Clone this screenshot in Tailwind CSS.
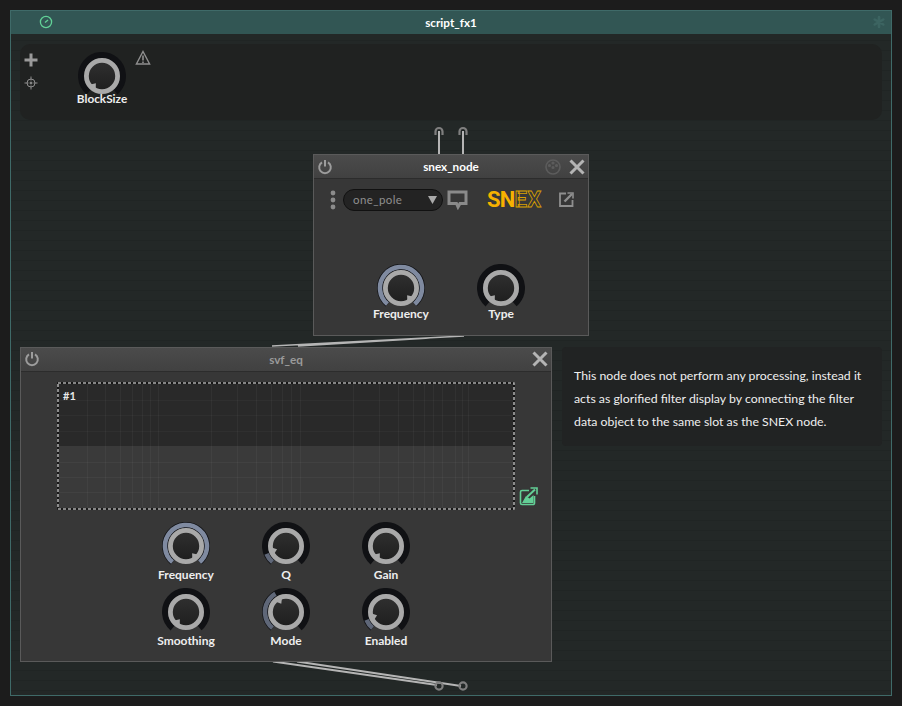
<!DOCTYPE html>
<html>
<head>
<meta charset="utf-8">
<script src="https://cdn.jsdelivr.net/npm/@tailwindcss/browser@4"></script>
</head>
<body class="m-0 bg-[#1c1c1c] font-['Lato','Noto_Sans',sans-serif]">
<svg class="absolute w-0 h-0"><defs>
  <linearGradient id="kf" x1="0" y1="0" x2="0" y2="1"><stop offset="0" stop-color="#303030"/><stop offset="1" stop-color="#1e1e1e"/></linearGradient>
  <g id="ring"><circle cx="24" cy="24" r="15.6" fill="url(#kf)" stroke="#a9a9a9" stroke-width="4.8"/></g>
  <g id="track"><circle cx="24" cy="24" r="21" fill="none" stroke="#101114" stroke-width="6" pathLength="360" stroke-dasharray="280 80" transform="rotate(130 24 24)"/></g>
  <polygon id="ptr" points="38,20.5 38,27.5 33.5,24" fill="#a9a9a9"/>
</defs></svg>

<div class="relative w-[902px] h-[706px] overflow-hidden p-[10px]">
  <!-- root frame -->
  <div class="h-[686px] flex flex-col border border-[#3f6a68] bg-[repeating-linear-gradient(180deg,#232827_0px,#232827_9px,#202524_9px,#202524_10px)]">
    <div class="relative h-[23px] shrink-0 bg-[#325654] flex items-center justify-center">
      <svg class="absolute left-[28px] top-[4px]" width="14" height="14" viewBox="0 0 14 14" fill="none" stroke="#62d197" stroke-width="1.3"><circle cx="7" cy="7" r="5.6"/><path d="M9 5 L6 7.6" /></svg>
      <span class="text-[11.7px] font-bold text-white">script_fx1</span>
      <svg class="absolute right-[5px] top-[4px]" width="14" height="14" viewBox="0 0 14 14" stroke="#3c6461" stroke-width="2.6" stroke-linecap="round"><path d="M7 2 V12 M2.7 4.5 L11.3 9.5 M2.7 9.5 L11.3 4.5"/></svg>
    </div>
    <!-- parameter panel -->
    <div class="relative mx-[9px] mt-[10px] h-[76px] rounded-[10px] bg-[#202221] flex">
      <div class="w-[22px] flex flex-col items-center pt-[9px] gap-[9px]">
        <svg width="14" height="14" viewBox="0 0 14 14" stroke="#9a9a9a" stroke-width="3"><path d="M7 0.5 V13.5 M0.5 7 H13.5"/></svg>
        <svg width="14" height="14" viewBox="0 0 14 14" fill="none" stroke="#8c8c8c" stroke-width="1"><circle cx="7" cy="7" r="4"/><path d="M7 0.5 V4.5 M7 9.5 V13.5 M0.5 7 H4.5 M9.5 7 H13.5"/><circle cx="7" cy="7" r="1" fill="#8c8c8c"/></svg>
      </div>
      <div class="ml-[36px] mt-[8px] flex flex-col items-center w-[48px]">
        <svg width="48" height="48" viewBox="0 0 48 48"><use href="#track"/><use href="#ring"/><use href="#ptr" transform="rotate(130 24 24)"/></svg>
        <span class="-mt-[9px] leading-[16px] text-[11.8px] font-bold text-[#eeeeee] whitespace-nowrap">BlockSize</span>
      </div>
      <svg class="ml-[9px] mt-[6px]" width="16" height="16" viewBox="0 0 16 16" fill="none" stroke="#8f8f8f" stroke-width="1.4"><path d="M8 1.5 L14.6 14 H1.4 Z"/><path d="M8 5.5 V10.5 M8 11.5 V13" stroke-width="1.6"/></svg>
    </div>
  </div>

  <!-- wires and connectors: free canvas -->
  <svg class="absolute left-0 top-0" width="902" height="706" fill="none">
    <g stroke="#b5b5b5" stroke-width="2">
      <path d="M439 131 V154 M463 131 V154"/>
      <path d="M272 346 L464 336 M298 346 L430 338" stroke-width="1.6"/>
      <path d="M273 661.5 L437 685 M297 661.5 L461 686"/>
    </g>
    <g stroke="#7f7f7f" stroke-width="2.2">
      <path d="M435.5 135 V131.5 a3.5 3.5 0 0 1 7 0 V135 M459.5 135 V131.5 a3.5 3.5 0 0 1 7 0 V135"/>
      <circle cx="439" cy="686" r="3.6"/><circle cx="463" cy="686" r="3.6"/>
    </g>
  </svg>

  <!-- snex_node -->
  <div class="absolute left-[313px] top-[154px] w-[276px] h-[182px] flex flex-col border border-[#5a5a5a] bg-[#373737]">
    <div class="relative h-[24px] shrink-0 bg-gradient-to-b from-[#4b4b4b] to-[#414141] border-b border-[#2c2c2c] flex items-center justify-center">
      <svg class="absolute left-[3px] top-[4px]" width="16" height="16" viewBox="0 0 16 16" fill="none" stroke="#9c9c9c" stroke-width="2"><path d="M5 3.4 A5.8 5.8 0 1 0 11 3.4"/><path d="M8 1 V7.5"/></svg>
      <span class="text-[11.7px] font-bold text-white">snex_node</span>
      <svg class="absolute right-[26px] top-[3px]" width="18" height="18" viewBox="0 0 18 18" fill="none" stroke="#5c5c5c" stroke-width="1.6"><circle cx="9" cy="9" r="7"/><circle cx="9" cy="5" r=".8"/><circle cx="5.5" cy="7.5" r=".8"/><circle cx="12.5" cy="7.5" r=".8"/><circle cx="9" cy="9.5" r=".8"/></svg>
      <svg class="absolute right-[3px] top-[4px]" width="16" height="16" viewBox="0 0 16 16" stroke="#b4b4b4" stroke-width="3"><path d="M1.5 1.5 L14.5 14.5 M14.5 1.5 L1.5 14.5"/></svg>
    </div>
    <div class="flex items-center h-[41px] pl-[16px]">
      <svg width="6" height="20" viewBox="0 0 6 20" fill="#8c8c8c"><circle cx="3" cy="3" r="2.4"/><circle cx="3" cy="10" r="2.4"/><circle cx="3" cy="17" r="2.4"/></svg>
      <div class="ml-[7px] w-[100px] h-[22px] rounded-full bg-[#232323] border border-[#111111] flex items-center justify-between pl-[9px] pr-[5px]">
        <span class="mt-[1px] text-[11.5px] tracking-[0.4px] text-[#8f8f8f]">one_pole</span>
        <svg width="9" height="8" viewBox="0 0 9 8" fill="#aaaaaa"><path d="M0 0 H9 L4.5 8 Z"/></svg>
      </div>
      <svg class="ml-[4px]" width="21" height="20" viewBox="0 0 21 20" fill="none" stroke="#8a8a8a" stroke-width="3"><path d="M2 2 H19 V13.5 H13 L11 17 L9.5 13.5 H2 Z"/></svg>
      <span class="ml-[19px] text-[22px] leading-[22px] font-['Roboto',sans-serif] font-bold text-[#f6b100] tracking-[-0.8px]">SN</span><span class="text-[22px] leading-[22px] font-['Roboto',sans-serif] font-bold text-transparent [-webkit-text-stroke:0.8px_#d9a000] tracking-[0.3px]">EX</span>
      <svg class="ml-[18px]" width="15" height="15" viewBox="0 0 15 15" fill="none" stroke="#8f8f8f" stroke-width="1.8"><path d="M7 1.5 H1 V14 H13.5 V8"/><path d="M5.5 9.5 L13 2" stroke-width="2.4"/><path d="M8.5 1 H14 V6.5" stroke-width="1.6"/></svg>
    </div>
    <div class="flex mt-[44px] ml-[37px]">
      <div class="w-[100px] flex flex-col items-center">
        <svg width="48" height="48" viewBox="0 0 48 48"><use href="#track"/><circle cx="24" cy="24" r="21" fill="none" stroke="#7f8aa0" stroke-width="4.6" pathLength="360" stroke-dasharray="280 80" transform="rotate(130 24 24)"/><use href="#ring"/><use href="#ptr" transform="rotate(50 24 24)"/></svg>
        <span class="-mt-[6px] leading-[16px] text-[12px] font-bold text-[#eeeeee]">Frequency</span>
      </div>
      <div class="w-[100px] flex flex-col items-center">
        <svg width="48" height="48" viewBox="0 0 48 48"><use href="#track"/><use href="#ring"/><use href="#ptr" transform="rotate(130 24 24)"/></svg>
        <span class="-mt-[6px] leading-[16px] text-[12px] font-bold text-[#eeeeee]">Type</span>
      </div>
    </div>
  </div>

  <!-- svf_eq -->
  <div class="absolute left-[20px] top-[347px] w-[532px] h-[315px] flex flex-col border border-[#5a5a5a] bg-[#373737]">
    <div class="relative h-[24px] shrink-0 bg-gradient-to-b from-[#4b4b4b] to-[#414141] border-b border-[#2c2c2c] flex items-center justify-center">
      <svg class="absolute left-[3px] top-[3px]" width="16" height="16" viewBox="0 0 16 16" fill="none" stroke="#9c9c9c" stroke-width="2"><path d="M5 3.4 A5.8 5.8 0 1 0 11 3.4"/><path d="M8 1 V7.5"/></svg>
      <span class="text-[11.7px] font-bold text-[#9a9a9a]">svf_eq</span>
      <svg class="absolute right-[3px] top-[3px]" width="16" height="16" viewBox="0 0 16 16" stroke="#b4b4b4" stroke-width="3"><path d="M1.5 1.5 L14.5 14.5 M14.5 1.5 L1.5 14.5"/></svg>
    </div>
    <div class="flex items-end mt-[10px] ml-[36px] gap-[4px]">
      <div class="relative w-[458px] h-[128px]">
        <svg class="block" width="458" height="128" viewBox="0 0 458 128" fill="none">
          <rect width="458" height="64" fill="#292929"/>
          <rect y="64" width="458" height="64" fill="#3a3a3a"/>
          <path stroke="#2f2f2f" d="M1 18.5 H457 M1 33.5 H457 M1 49.5 H457"/>
          <path stroke="#414141" d="M1 80.5 H457 M1 95.5 H457 M1 110.5 H457"/>
          <path stroke="#ffffff" stroke-opacity=".04" d="M30.5 1 V127 M48.5 1 V127 M63.5 1 V127 M75.5 1 V127 M85.5 1 V127 M93.5 1 V127 M101.5 1 V127 M154.5 1 V127 M180.5 1 V127 M199.5 1 V127 M214.5 1 V127 M225.5 1 V127 M234.5 1 V127 M243.5 1 V127 M296.5 1 V127 M322.5 1 V127 M341.5 1 V127 M356.5 1 V127 M367.5 1 V127 M376.5 1 V127 M385.5 1 V127 M398.5 1 V127 M405.5 1 V127 M411.5 1 V127"/>
          <rect x="1" y="1" width="456" height="126" stroke="#111111" stroke-width="1.6"/>
          <rect x="1" y="1" width="456" height="126" stroke="#aaaaaa" stroke-width="1.6" stroke-dasharray="3 2"/>
        </svg>
        <span class="absolute left-[6px] top-[7px] text-[11px] leading-[13px] font-bold text-[#e8e8e8]">#1</span>
      </div>
      <svg class="mb-[4px]" width="19" height="19" viewBox="0 0 19 19" fill="none" stroke="#63cf96" stroke-width="1.6"><path d="M10 3.5 H3 A1.5 1.5 0 0 0 1.5 5 V16 A1.5 1.5 0 0 0 3 17.5 H14 A1.5 1.5 0 0 0 15.5 16 V9"/><path d="M3 16 L7 9 L10.5 11.5 L14.5 8 V16 Z" fill="#63cf96" stroke="none"/><path d="M8 10 L16 2.5" stroke-width="2"/><path d="M11.5 1 H18 V7.5" stroke-width="1.6"/></svg>
    </div>
    <div class="grid grid-cols-[100px_100px_100px] gap-y-[5px] mt-[12px] ml-[115px]">
      <div class="flex flex-col items-center">
        <svg width="48" height="48" viewBox="0 0 48 48"><use href="#track"/><circle cx="24" cy="24" r="21" fill="none" stroke="#7f8aa0" stroke-width="4.6" pathLength="360" stroke-dasharray="280 80" transform="rotate(130 24 24)"/><use href="#ring"/><use href="#ptr" transform="rotate(50 24 24)"/></svg>
        <span class="-mt-[3px] leading-[16px] h-[16px] text-[12px] font-bold text-[#eeeeee]">Frequency</span>
      </div>
      <div class="flex flex-col items-center">
        <svg width="48" height="48" viewBox="0 0 48 48"><use href="#track"/><circle cx="24" cy="24" r="21" fill="none" stroke="#5f6778" stroke-width="4.6" pathLength="360" stroke-dasharray="28 332" transform="rotate(130 24 24)"/><use href="#ring"/><use href="#ptr" transform="rotate(160 24 24)"/></svg>
        <span class="-mt-[3px] leading-[16px] h-[16px] text-[12px] font-bold text-[#eeeeee]">Q</span>
      </div>
      <div class="flex flex-col items-center">
        <svg width="48" height="48" viewBox="0 0 48 48"><use href="#track"/><use href="#ring"/><use href="#ptr" transform="rotate(130 24 24)"/></svg>
        <span class="-mt-[3px] leading-[16px] h-[16px] text-[12px] font-bold text-[#eeeeee]">Gain</span>
      </div>
      <div class="flex flex-col items-center">
        <svg width="48" height="48" viewBox="0 0 48 48"><use href="#track"/><use href="#ring"/><use href="#ptr" transform="rotate(130 24 24)"/></svg>
        <span class="-mt-[3px] leading-[16px] h-[16px] text-[12px] font-bold text-[#eeeeee]">Smoothing</span>
      </div>
      <div class="flex flex-col items-center">
        <svg width="48" height="48" viewBox="0 0 48 48"><use href="#track"/><circle cx="24" cy="24" r="21" fill="none" stroke="#5f6778" stroke-width="4.6" pathLength="360" stroke-dasharray="110 250" transform="rotate(130 24 24)"/><use href="#ring"/><use href="#ptr" transform="rotate(240 24 24)"/></svg>
        <span class="-mt-[3px] leading-[16px] h-[16px] text-[12px] font-bold text-[#eeeeee]">Mode</span>
      </div>
      <div class="flex flex-col items-center">
        <svg width="48" height="48" viewBox="0 0 48 48"><use href="#track"/><circle cx="24" cy="24" r="21" fill="none" stroke="#5f6778" stroke-width="4.6" pathLength="360" stroke-dasharray="28 332" transform="rotate(130 24 24)"/><use href="#ring"/><use href="#ptr" transform="rotate(160 24 24)"/></svg>
        <span class="-mt-[3px] leading-[16px] h-[16px] text-[12px] font-bold text-[#eeeeee]">Enabled</span>
      </div>
    </div>
  </div>

  <!-- comment -->
  <div class="absolute left-[562px] top-[347px] w-[320px] h-[99px] rounded-[4px] bg-[#212323] pl-[12px] pt-[17px] text-[12.3px] leading-[23px] text-[#efefef]">
    <div class="whitespace-nowrap">This node does not perform any processing, instead it</div>
    <div class="whitespace-nowrap">acts as glorified filter display by connecting the filter</div>
    <div class="whitespace-nowrap">data object to the same slot as the SNEX node.</div>
  </div>
</div>
</body>
</html>
